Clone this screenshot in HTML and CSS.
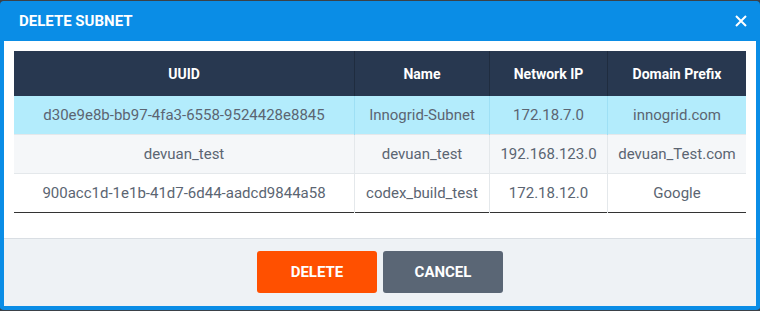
FILE: index.html
```html
<!DOCTYPE html>
<html lang="en">
<head>
  <meta charset="UTF-8">
  <title>Delete Subnet</title>
  <link rel="stylesheet" href="styles.css">
</head>
<body>
  <div class="dialog">
    <div class="dialog-head">
      <span class="dialog-title">DELETE SUBNET</span>
      <button class="close-btn" aria-label="Close">
        <svg width="12" height="12" viewBox="0 0 12 12"><path d="M1 1L11 11M11 1L1 11" stroke="#fff" stroke-width="2" fill="none"/></svg>
      </button>
    </div>
    <div class="dialog-body">
      <table class="subnets">
        <thead>
          <tr>
            <th class="c-uuid">UUID</th>
            <th class="c-name">Name</th>
            <th class="c-ip">Network IP</th>
            <th class="c-domain">Domain Prefix</th>
          </tr>
        </thead>
        <tbody>
          <tr class="selected">
            <td>d30e9e8b-bb97-4fa3-6558-9524428e8845</td>
            <td>Innogrid-Subnet</td>
            <td>172.18.7.0</td>
            <td>innogrid.com</td>
          </tr>
          <tr class="odd">
            <td>devuan_test</td>
            <td>devuan_test</td>
            <td>192.168.123.0</td>
            <td>devuan_Test.com</td>
          </tr>
          <tr>
            <td>900acc1d-1e1b-41d7-6d44-aadcd9844a58</td>
            <td>codex_build_test</td>
            <td>172.18.12.0</td>
            <td>Google</td>
          </tr>
        </tbody>
      </table>
    </div>
    <div class="dialog-foot">
      <button class="btn btn-delete">DELETE</button>
      <button class="btn btn-cancel">CANCEL</button>
    </div>
  </div>
</body>
</html>
```

FILE: styles.css
```css
body { margin: 0; padding: 1px 0 0; background: #3b4148; font-family: Roboto, "Liberation Sans", Arial, sans-serif; }
.dialog { height: 309px; box-sizing: border-box; background: #0a8de6; border: 4px solid #0a8de6; border-top: 0; border-radius: 4px; display: flex; flex-direction: column; }
.dialog-head { height: 40px; display: flex; align-items: center; justify-content: space-between; padding: 0 9px 0 15px; color: #fff; }
.dialog-title { font-size: 15px; font-weight: bold; }
.close-btn { background: none; border: none; padding: 0; width: 12px; height: 12px; cursor: pointer; display: flex; }
.dialog-body { background: #fff; padding: 10px 10px 0; height: 197px; box-sizing: border-box; }
.subnets { width: 100%; border-collapse: collapse; font-size: 15px; color: #5b6572; text-align: center; border-bottom: 1px solid #333; }
.subnets th { background: #283850; color: #fff; font-size: 14px; font-weight: bold; height: 45px; padding: 0; border-left: 1px solid #1f2c3f; }
.subnets th:first-child, .subnets td:first-child { border-left: none; }
.subnets td { height: 38px; padding: 0; border-left: 1px solid #e4e8eb; border-top: 1px solid #e4e8eb; }
.subnets tbody tr:first-child td { border-top: none; }
.c-uuid { width: 340px; }
.c-name { width: 134px; }
.c-ip { width: 117px; }
.subnets tr.selected td { background: #b3ecfc; border-left-color: #9ee0f5; }
.subnets tr.selected td:first-child { border-left: none; }
.subnets tr.odd td { background: #f5f7f9; }
.dialog-foot { flex: 1; background: #eef2f5; border-top: 1px solid #d9dee3; display: flex; justify-content: center; gap: 6px; padding-top: 12px; }
.btn { width: 120px; height: 42px; border: none; border-radius: 3px; color: #fff; font-family: inherit; font-size: 15px; font-weight: bold; cursor: pointer; }
.btn-delete { background: #ff5000; }
.btn-cancel { background: #5a6675; }
```
